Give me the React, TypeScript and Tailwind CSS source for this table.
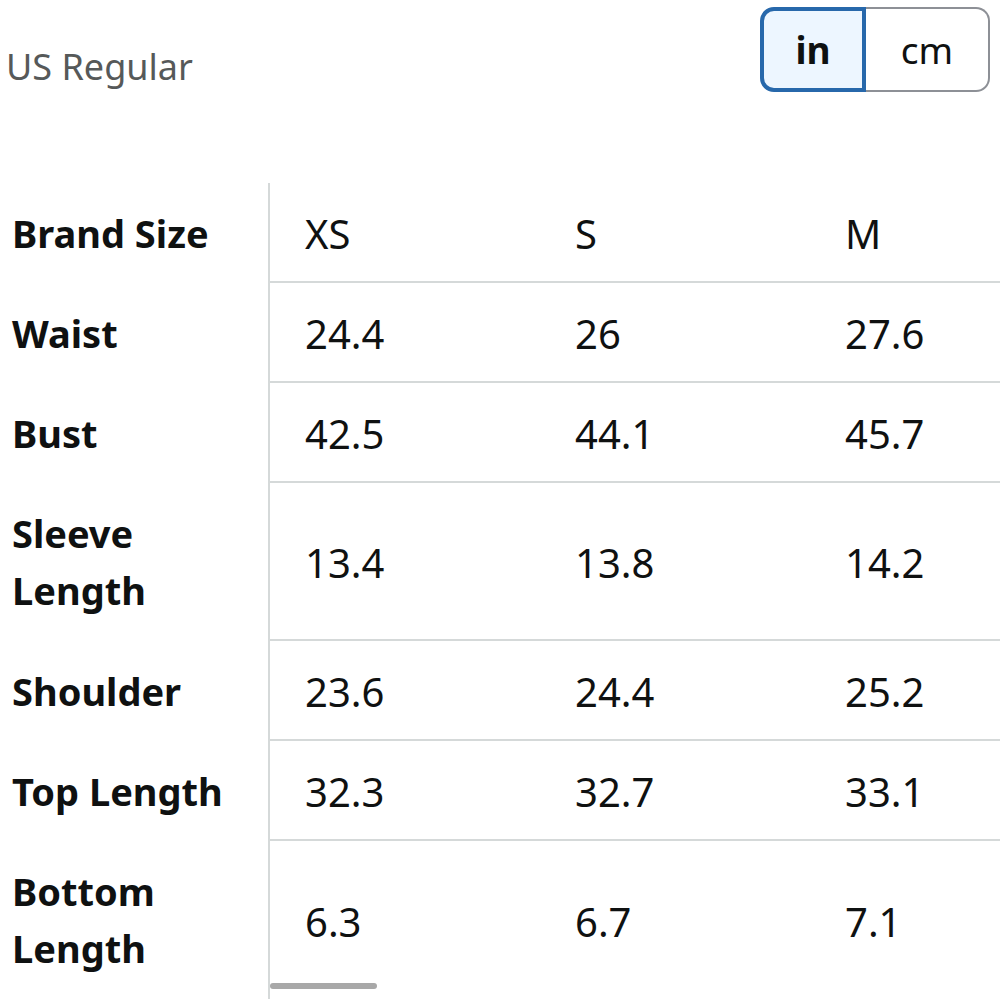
import React, { useState } from 'react';

type Row = {
  label: string[];
  values: string[];
  tall?: boolean;
};

const rows: Row[] = [
  { label: ['Brand Size'], values: ['XS', 'S', 'M'] },
  { label: ['Waist'], values: ['24.4', '26', '27.6'] },
  { label: ['Bust'], values: ['42.5', '44.1', '45.7'] },
  { label: ['Sleeve', 'Length'], values: ['13.4', '13.8', '14.2'], tall: true },
  { label: ['Shoulder'], values: ['23.6', '24.4', '25.2'] },
  { label: ['Top Length'], values: ['32.3', '32.7', '33.1'] },
  { label: ['Bottom', 'Length'], values: ['6.3', '6.7', '7.1'], tall: true },
];

const SizeChart = () => {
  const [unit, setUnit] = useState<'in' | 'cm'>('in');

  return (
    <div className="w-[1000px] h-[1000px] overflow-hidden bg-white text-[#0f1111] font-['Noto_Sans',sans-serif] relative">
      {/* Header */}
      <div className="flex justify-between items-start h-[183px]">
        <div className="pl-[6px] pt-[40px] text-[36px] text-[#565959]">US Regular</div>
        <div className="flex mt-[7px] mr-[10px] h-[85px]">
          <button
            onClick={() => setUnit('in')}
            className={`w-[106px] rounded-l-[14px] text-[37px] ${
              unit === 'in'
                ? 'border-4 border-[#2768ab] bg-[#edf6ff] font-bold'
                : 'border-2 border-r-0 border-[#8d9096] bg-white'
            }`}
          >
            in
          </button>
          <button
            onClick={() => setUnit('cm')}
            className={`w-[124px] rounded-r-[14px] text-[37px] ${
              unit === 'cm'
                ? 'border-4 border-[#2768ab] bg-[#edf6ff] font-bold'
                : 'border-2 border-l-0 border-[#8d9096] bg-white'
            }`}
          >
            cm
          </button>
        </div>
      </div>

      {/* Table */}
      <div className="flex flex-col">
        {rows.map((row, i) => (
          <div key={row.label.join(' ')} className="flex">
            <div className="w-[270px] shrink-0 border-r-2 border-[#d5d9d9] flex flex-col justify-center pl-[12px] font-bold text-[38px] leading-[57px] whitespace-nowrap">
              {row.label.map((l) => (
                <span key={l}>{l}</span>
              ))}
            </div>
            <div
              className={`flex-1 flex items-center ${row.tall ? 'h-[158px]' : 'h-[100px]'} ${
                i < rows.length - 1 ? 'border-b-2 border-[#d5d9d9]' : ''
              }`}
            >
              {row.values.map((v, j) => (
                <div key={j} className="w-[270px] shrink-0 pl-[35px] pt-[4px] text-[40px]">
                  {v}
                </div>
              ))}
            </div>
          </div>
        ))}
      </div>

      {/* Scroll indicator */}
      <div className="absolute left-[270px] bottom-[11px] w-[107px] h-[6px] rounded-full bg-[#a8a8a8]" />
    </div>
  );
};

export default function App() {
  return <SizeChart />;
}
